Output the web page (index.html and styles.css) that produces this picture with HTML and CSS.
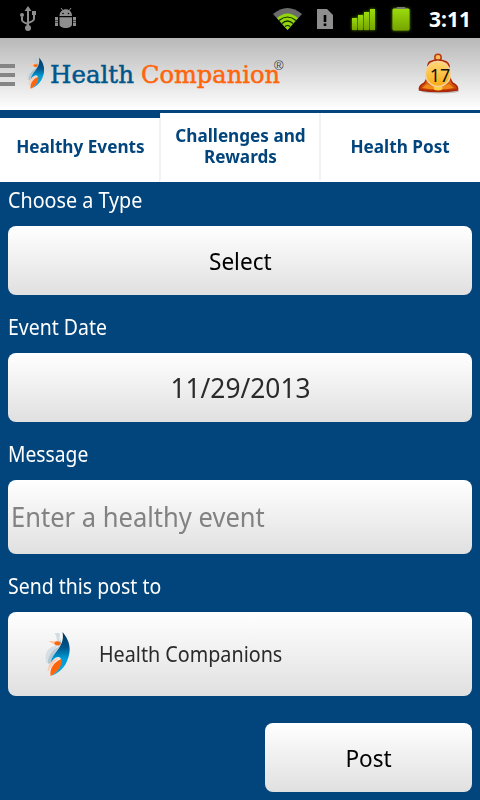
FILE: index.html
```
<!DOCTYPE html>
<html lang="en">
<head>
<meta charset="utf-8">
<title>Health Companion</title>
<link rel="stylesheet" href="styles.css">
</head>
<body>
<svg width="0" height="0" class="defs" aria-hidden="true">
  <defs>
    <linearGradient id="wing" x1="0" y1="0" x2="0" y2="1"><stop offset="0" stop-color="#003760"/><stop offset=".35" stop-color="#00568a"/><stop offset=".6" stop-color="#009bd6"/><stop offset="1" stop-color="#12aee6"/></linearGradient>
    <linearGradient id="green" x1="0" y1="0" x2="0" y2="1"><stop offset="0" stop-color="#9bdc0c"/><stop offset="1" stop-color="#76a400"/></linearGradient>
    <linearGradient id="bell" x1="0" y1="0" x2="0" y2="1"><stop offset="0" stop-color="#f6a233"/><stop offset=".6" stop-color="#ee7a13"/><stop offset="1" stop-color="#b92a08"/></linearGradient>
    <linearGradient id="gold" x1="0" y1="0" x2="0" y2="1"><stop offset="0" stop-color="#ffd777"/><stop offset="1" stop-color="#f8ac12"/></linearGradient>
    <symbol id="mark" viewBox="0 0 24 45">
      <path d="M9 1c4 6 3 12-3 18 5-2 8-6 8-18z" fill="#b9cbd9" opacity=".6"/>
      <path d="M13 1c2 4 2 9-1 14l4-3z" fill="#7fa5c0" opacity=".7"/>
      <path d="M0 26C0 18 5 14 13 13C7 18 3 24 1 32z" fill="#cfdbe4" opacity=".8"/>
      <path d="M2 31C3 22 8 17 15 14C9 20 6 27 4 32z" fill="#9bb6c9" opacity=".7"/>
      <path d="M17 0C23 7 26 15 23 25C20 36 13 41 6 44C11 40 17 33 15 26C12 23 7 27 5 32C6 20 20 16 17 0z" fill="url(#wing)"/>
      <path d="M3 9c4 0 7 0 10 1l-2 3c-3-1-5-2-8-4z" fill="#ffc6a0"/>
      <ellipse cx="12" cy="11.300" rx="3" ry="2" fill="#ff650b"/>
      <path d="M2 39c1-8 6-13 12-13c-5 3-8 7-11 13z" fill="#ffc9ad"/>
      <path d="M5 44c-1-7 3-14 11-17c1 7-4 13-11 17z" fill="#ff650b"/>
    </symbol>
  </defs>
</svg>
<div class="screen">
  <div class="status">
    <svg class="status-icons" width="480" height="38" viewBox="0 0 480 38">
      <g fill="none" stroke="#8e8e8e" stroke-width="2">
        <path d="M28 10v16M22 17v3q0 2 6 4M34 15v4q0 2-6 4"/>
      </g>
      <g fill="#8e8e8e">
        <path d="M28 6l3.500 5h-7zM32 11h4v4h-4z"/><circle cx="22" cy="15" r="2"/><circle cx="28" cy="28" r="3"/>
        <path d="M59.500 16c0-9 12.500-9 12.500 0z"/>
        <path d="M59.500 17.300h12.500v7c0 5-12.500 5-12.500 0zM55 17h3v3h-3zM55 20.500h3v2h-3zM55 23h3v3h-3zM73 17h3v3h-3zM73 20.500h3v2h-3zM73 23h3v3h-3z"/>
        <path d="M61 8l3 4M71 8l-3 4" stroke="#8e8e8e"/>
        <path d="M317 9h10l6 6v14h-16z"/>
      </g>
      <circle cx="63" cy="13.500" r=".8"/><circle cx="68.500" cy="13.500" r=".8"/>
      <path d="M323.700 15h2.600v7h-2.600zM323.700 23.500h2.600v2.500h-2.600z"/>
      <path d="M273 14q14.500-12 29 0l-14.500 16z" fill="#6b6b6b"/>
      <path d="M277 18q10.500-9 21 0l-10.500 12z" fill="#91d70b"/>
      <path d="M279 20.500q8.500-7 17 0M282 23.500q5.500-5 11 0M285 26.500q2.500-2 5 0" fill="none" stroke="#172300" stroke-width="1.200"/>
      <g class="glow" fill="url(#green)"><path d="M352 18h5v12h-5z"/><path d="M358 15h5v15h-5z"/><path d="M364 12h5v18h-5z"/><path d="M370 9h5v21h-5z"/><rect x="392.500" y="8.500" width="17" height="22" rx="1.500"/></g>
      <path d="M396 9l1-2h8l1 2z" fill="#777"/>
    </svg>
    <span class="clock">3:11</span>
  </div>
  <header class="header">
    <div class="menu"><i></i><i></i><i></i></div>
    <svg class="logo" width="17" height="33"><use href="#mark"/></svg>
    <svg class="wordmark" width="240" height="50" viewBox="48 50 240 50">
      <text class="health" x="50" y="83" textLength="84" lengthAdjust="spacingAndGlyphs">Health</text>
      <text class="companion" x="141" y="83" textLength="139" lengthAdjust="spacingAndGlyphs">Companion</text>
      <text class="reg" x="274" y="70">®</text>
    </svg>
    <div class="alert">
      <svg width="44" height="44" viewBox="416 51 44 44">
        <ellipse cx="440" cy="91" rx="19" ry="2.500" fill="#777" opacity=".4"/>
        <circle cx="438" cy="57.500" r="3.200" fill="#f9bd62" stroke="#bd380b" stroke-width="1.500"/>
        <path d="M429.500 62q8.500-4 17 0q3 2 2.500 6c0 7 1 12 3.500 15q6 3 5 7q-19 3-38 0q-1-4 5-7c2.500-3 3.500-8 3.500-15q-.5-4 1.500-6z" fill="url(#bell)" stroke="#a82808" stroke-width="1.500"/>
        <path d="M427 84q11 5 22 0l5 4q-16 3-32 0z" fill="#f08a18"/>
        <ellipse cx="438" cy="88" rx="4.500" ry="2.500" fill="#ffcd3d"/>
        <circle cx="438" cy="74" r="12.500" fill="url(#gold)" stroke="#f5d2a4" stroke-width="1.500"/>
      </svg>
      <span class="count">17</span>
    </div>
  </header>
  <nav class="tabs">
    <div class="tab active"><span>Healthy Events</span></div>
    <div class="tab"><span>Challenges and<br>Rewards</span></div>
    <div class="tab"><span>Health Post</span></div>
  </nav>
  <main class="form">
    <div class="label"><span class="type-label">Choose a Type</span></div>
    <div class="box select"><span>Select</span></div>
    <div class="label"><span>Event Date</span></div>
    <div class="box date"><span>11/29/2013</span></div>
    <div class="label"><span class="message-label">Message</span></div>
    <div class="box message"><span>Enter a healthy event</span></div>
    <div class="label"><span>Send this post to</span></div>
    <div class="box target"><svg width="25" height="45"><use href="#mark"/></svg><span>Health Companions</span></div>
    <div class="box post"><span>Post</span></div>
  </main>
</div>
</body>
</html>
```
FILE: styles.css
```
* { box-sizing: border-box; }
body { margin: 0; background: #02457c; font-family: "Noto Sans", "Open Sans", sans-serif; }
.defs { position: absolute; }
.screen { width: 480px; height: 800px; overflow: hidden; display: flex; flex-direction: column; }
span { display: inline-block; white-space: nowrap; }

.status { height: 38px; background: #000; display: grid; flex: none; }
.status > * { grid-area: 1 / 1; }
.status-icons { display: block; }
.glow { filter: drop-shadow(0 0 1.5px #69a000); }
.clock { justify-self: end; margin-right: 9px; color: #fff; font-weight: 700; font-size: 21px; line-height: 39px; }

.header { height: 72px; flex: none; display: flex; background: linear-gradient(#b8b8b8, #fff); }
.menu { width: 15px; padding-top: 26px; display: flex; flex-direction: column; gap: 5px; }
.menu i { height: 4px; background: #858585; }
.logo { margin: 19px 0 0 12px; }
.wordmark { margin: 12px 0 0 4px; font-family: "DejaVu Serif", serif; font-size: 25px; }
.health { fill: #00568c; stroke: #00568c; stroke-width: .5px; }
.companion { fill: #ff650b; stroke: #ff650b; stroke-width: .5px; }
.reg { font-family: "Liberation Sans", sans-serif; font-size: 13px; fill: #444; }
.alert { width: 44px; height: 44px; margin: 13px 0 0 128px; display: grid; }
.alert > * { grid-area: 1 / 1; }
.count { font-size: 18px; line-height: 49px; text-align: center; padding-left: 4px; color: #111; }

.tabs { height: 72px; flex: none; border-top: 3px solid #02457c; background: #fff; display: grid; grid-template-columns: repeat(3, 160px); }
.tab { display: flex; align-items: center; justify-content: center; color: #02457c; text-align: center; font-weight: 700; font-size: 18px; line-height: 21px; padding-bottom: 3px; background: linear-gradient(#f2f2f2, #f2f2f2) right top / 1px 67px no-repeat; }
.tab + .tab { background: linear-gradient(#f2f2f2, #f2f2f2) left top / 1px 67px no-repeat, linear-gradient(#f2f2f2, #f2f2f2) right top / 1px 67px no-repeat; }
.tab:last-child { background: linear-gradient(#f2f2f2, #f2f2f2) left top / 1px 67px no-repeat; }
.tab.active { border-top: 5px solid #02457c; padding-bottom: 8px; }
.tab span { transform: scaleX(.953); }

.form { padding: 0 8px; display: flex; flex-direction: column; }
.label { height: 44px; color: #fff; font-size: 22px; line-height: 35px; }
.label span { transform: scaleX(.885); transform-origin: left; }
.label .type-label { transform: scaleX(.897); }
.label .message-label { transform: scaleX(.876); }
.box { height: 69px; flex: none; border-radius: 8px; background: linear-gradient(#fff, #e0e0e0); display: flex; align-items: center; justify-content: center; color: #000; font-size: 24px; margin-bottom: 14px; }
.box span { transform: scaleX(.94); }
.date { font-size: 28px; color: #2a2a2a; padding-bottom: 2px; }
.message { height: 74px; justify-content: flex-start; padding: 0 0 2px 3px; font-size: 28px; color: #828282; }
.message span { transform: scaleX(.912); transform-origin: left; }
.target { height: 84px; justify-content: flex-start; padding-left: 37px; font-size: 22px; color: #2a2a2a; margin-bottom: 27px; }
.target span { margin: 0 0 2px 29px; transform: scaleX(.897); transform-origin: left; }
.post { width: 207px; align-self: flex-end; margin-bottom: 0; }
```
